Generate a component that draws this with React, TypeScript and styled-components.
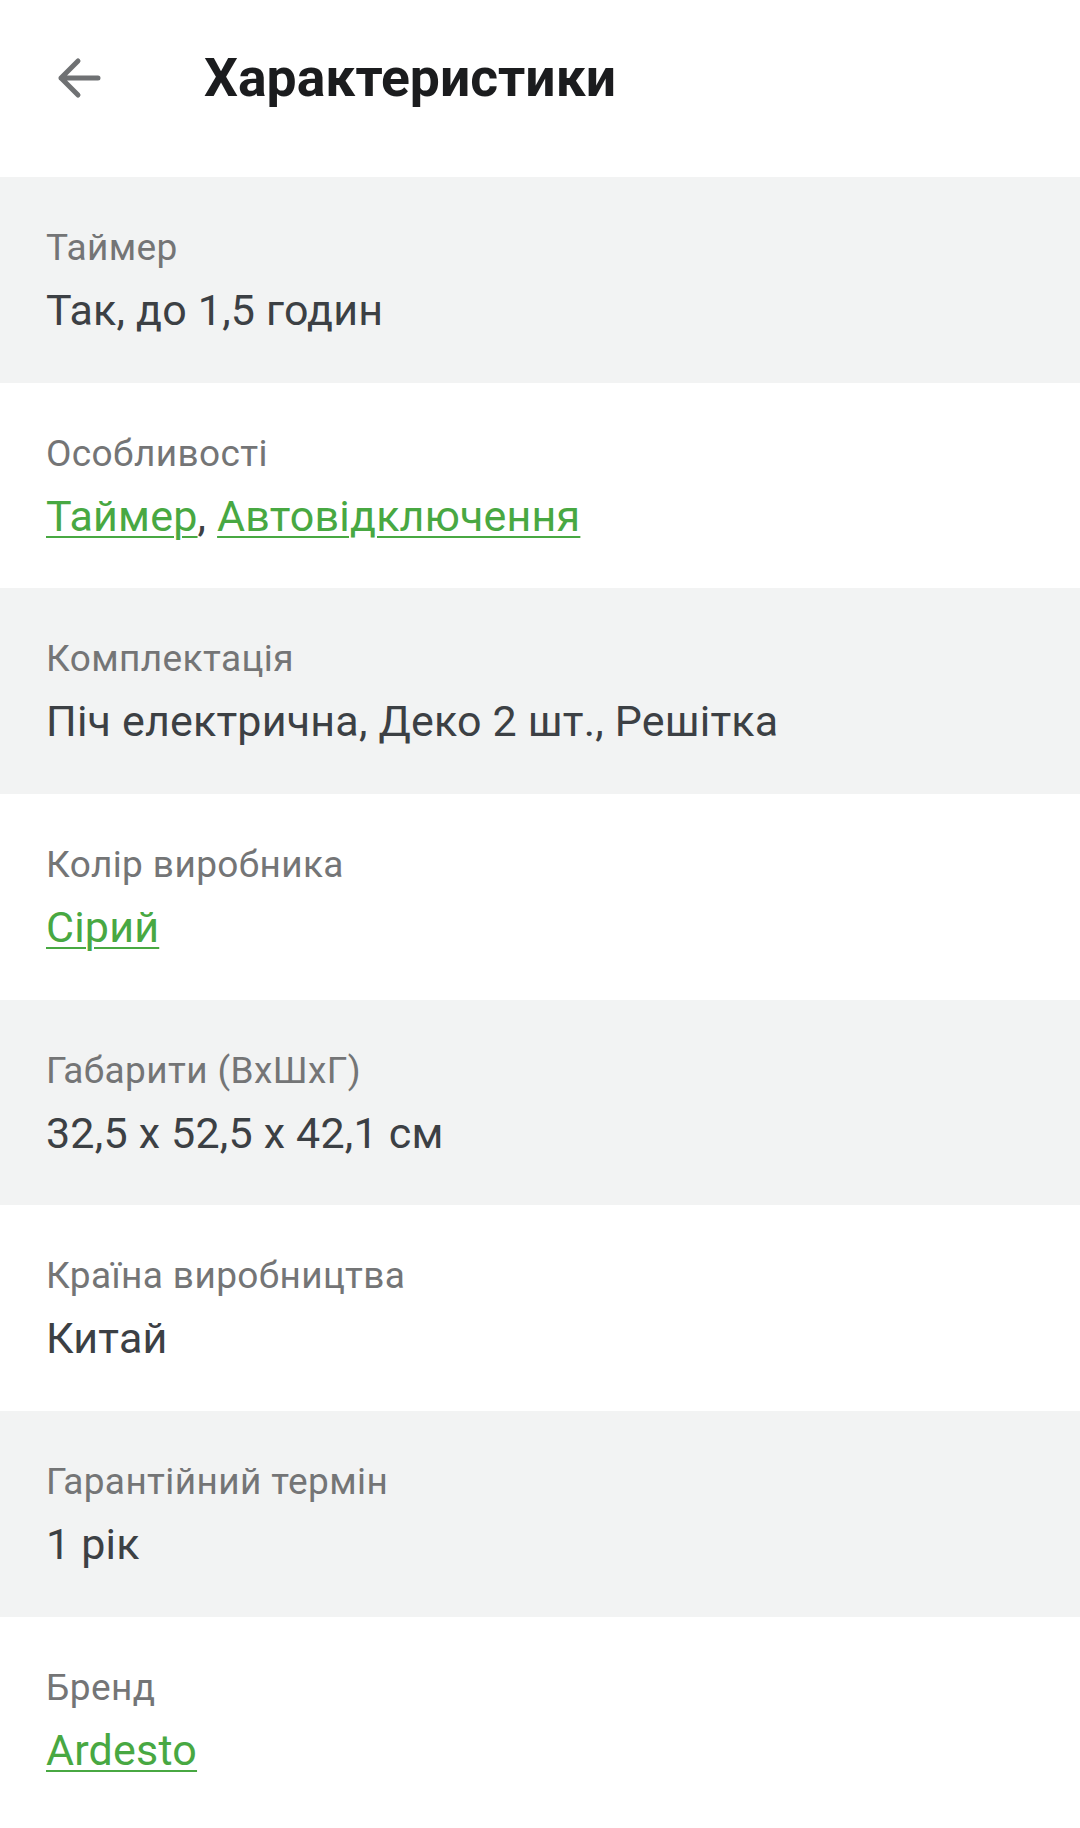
import React from 'react';
import styled, { createGlobalStyle } from 'styled-components';

const GlobalStyle = createGlobalStyle`
  html, body {
    margin: 0;
    padding: 0;
    background: #ffffff;
  }
  body {
    font-family: Roboto, "Noto Sans", "Liberation Sans", sans-serif;
    -webkit-font-smoothing: antialiased;
  }
`;

const Page = styled.div`
  width: 1080px;
  min-height: 1828px;
  background: #ffffff;
`;

const Header = styled.header`
  height: 177px;
  display: flex;
  align-items: center;
  padding: 0 0 22px 52px;
  box-sizing: border-box;
`;

const BackButton = styled.button`
  width: 54px;
  height: 54px;
  padding: 0;
  border: 0;
  background: none;
  display: flex;
  align-items: center;
  justify-content: center;
  color: #6f7173;
  margin-right: 98px;
  cursor: pointer;
`;

const Title = styled.h1`
  margin: 0;
  font-size: 53.5px;
  font-weight: 700;
  color: #1b1c1e;
`;

const List = styled.div`
  display: flex;
  flex-direction: column;
`;

const Row = styled.div<{ $shaded: boolean }>`
  height: 205.7px;
  box-sizing: border-box;
  padding: 49px 46px 0;
  background: ${(p) => (p.$shaded ? '#f2f3f3' : '#ffffff')};
  display: flex;
  flex-direction: column;
`;

const Label = styled.div`
  font-size: 37px;
  line-height: 44px;
  letter-spacing: 0.4px;
  color: #747576;
`;

const Value = styled.div`
  margin-top: 14px;
  font-size: 43px;
  line-height: 52px;
  letter-spacing: 0.2px;
  color: #3c4044;
`;

const Link = styled.a`
  color: #48a842;
  text-decoration: underline;
  text-decoration-thickness: 2px;
  text-underline-offset: 5px;
`;

type Spec = {
  label: string;
  value?: string;
  links?: string[];
};

const specs: Spec[] = [
  { label: 'Таймер', value: 'Так, до 1,5 годин' },
  { label: 'Особливості', links: ['Таймер', 'Автовідключення'] },
  { label: 'Комплектація', value: 'Піч електрична, Деко 2 шт., Решітка' },
  { label: 'Колір виробника', links: ['Сірий'] },
  { label: 'Габарити (ВхШхГ)', value: '32,5 x 52,5 x 42,1 см' },
  { label: 'Країна виробництва', value: 'Китай' },
  { label: 'Гарантійний термін', value: '1 рік' },
  { label: 'Бренд', links: ['Ardesto'] },
];

const ArrowBack = () => (
  <svg width="44" height="42" viewBox="0 0 44 42" fill="none">
    <path
      d="M41 21H4M21 4L4 21L21 38"
      stroke="currentColor"
      strokeWidth="5"
      strokeLinecap="round"
      strokeLinejoin="round"
    />
  </svg>
);

export default function App() {
  return (
    <Page>
      <GlobalStyle />
      <Header>
        <BackButton aria-label="Назад">
          <ArrowBack />
        </BackButton>
        <Title>Характеристики</Title>
      </Header>
      <List>
        {specs.map((spec, i) => (
          <Row key={spec.label} $shaded={i % 2 === 0}>
            <Label>{spec.label}</Label>
            <Value>
              {spec.links
                ? spec.links.map((l, j) => (
                    <React.Fragment key={l}>
                      {j > 0 && ', '}
                      <Link href="#">{l}</Link>
                    </React.Fragment>
                  ))
                : spec.value}
            </Value>
          </Row>
        ))}
      </List>
    </Page>
  );
}
